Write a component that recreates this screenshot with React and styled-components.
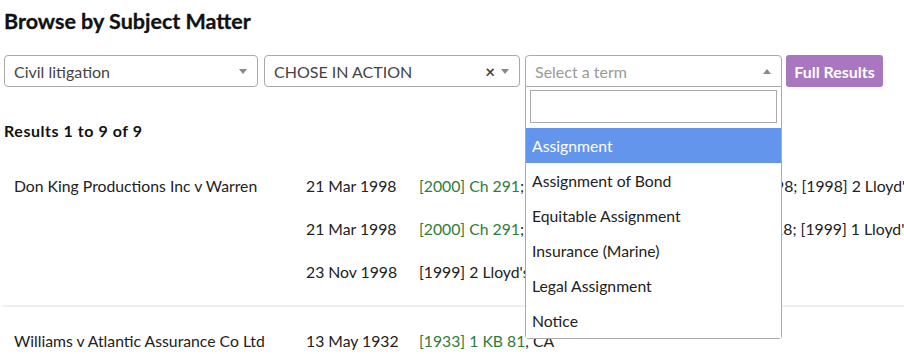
import React from "react";
import styled, { createGlobalStyle } from "styled-components";

const Global = createGlobalStyle`
  html, body { margin: 0; padding: 0; background: #fff; overflow: hidden; }
  body { font-family: Lato, "Open Sans", sans-serif; color: #222; }
  * { box-sizing: border-box; }
`;

const Page = styled.div`
  width: 904px;
  height: 354px;
  overflow: hidden;
  padding: 0 0 0 4px;
`;

const Title = styled.h1`
  margin: 0;
  padding-top: 7px;
  height: 55px;
  font-size: 21.5px;
  line-height: 28px;
  font-weight: 700;
  color: #111;
  -webkit-text-stroke: 0.3px #111;
`;

const Toolbar = styled.div`
  display: flex;
  align-items: flex-start;
  height: 32px;
`;

const SelectWrap = styled.div`
  position: relative;
  width: ${(p) => p.$w}px;
  margin-right: ${(p) => p.$gap}px;
`;

const SelectBox = styled.div`
  display: flex;
  align-items: center;
  height: 32px;
  border: 1px solid #aaa;
  border-radius: ${(p) => (p.$open ? "4px 4px 0 0" : "4px")};
  padding: 0 8px 0 9px;
  font-size: 16px;
  color: ${(p) => (p.$placeholder ? "#999" : "#444")};
  background: #fff;
`;

const SelectText = styled.span`
  flex: 1;
  white-space: nowrap;
`;

const Clear = styled.span`
  font-size: 17px;
  font-weight: 700;
  color: #444;
  margin-right: 6px;
  line-height: 1;
`;

const Arrow = styled.span`
  width: 0;
  height: 0;
  border-left: 4px solid transparent;
  border-right: 4px solid transparent;
  ${(p) =>
    p.$up
      ? "border-bottom: 5px solid #888;"
      : "border-top: 5px solid #888;"}
  margin-right: 2px;
`;

const Button = styled.button`
  width: 97px;
  height: 32px;
  padding: 0;
  border: none;
  border-radius: 3px;
  background: #a877bf;
  color: #fff;
  font-family: Lato, sans-serif;
  font-weight: 700;
  font-size: 16px;
`;

const Dropdown = styled.div`
  position: absolute;
  top: 32px;
  left: 0;
  width: 100%;
  background: #fff;
  border: 1px solid #aaa;
  border-top: none;
  border-radius: 0 0 4px 4px;
  z-index: 10;
`;

const SearchWrap = styled.div`
  padding: 3px 4px 5px 4px;
`;

const Search = styled.div`
  height: 33px;
  border: 1px solid #aaa;
`;

const Option = styled.div`
  height: 35px;
  display: flex;
  align-items: center;
  padding: 0 6px;
  font-size: 15.75px;
  color: ${(p) => (p.$active ? "#fff" : "#222")};
  background: ${(p) => (p.$active ? "#6495ed" : "#fff")};
`;

const ResultsHead = styled.div`
  margin-top: 33px;
  font-size: 16px;
  letter-spacing: 0.55px;
  font-weight: 700;
  color: #111;
  height: 22px;
  line-height: 22px;
`;

const Table = styled.div`
  margin-top: 10px;
  margin-left: -1px;
`;

const Group = styled.div`
  padding: 12px 0;
  border-bottom: ${(p) => (p.$last ? "none" : "2px solid #eee")};
`;

const Row = styled.div`
  display: grid;
  grid-template-columns: 292px 113px auto;
  height: 43px;
  align-items: center;
  font-size: 15.75px;
  color: #222;
  white-space: nowrap;
  padding-left: 11px;
`;

const Link = styled.span`
  color: #2e7d3a;
`;

const cases = [
  {
    name: "Don King Productions Inc v Warren",
    rows: [
      { date: "21 Mar 1998", link: "[2000] Ch 291", rest: "; [1999] 3 WLR 27;\u2009 [1998] 2 All ER 998; [1998] 2 Lloyd's Rep 176" },
      { date: "21 Mar 1998", link: "[2000] Ch 291", rest: "; [1999] 3 WLR 276;[1999] 2 All ER218; [1999] 1 Lloyd's Rep 588" },
      { date: "23 Nov 1998", link: null, rest: "[1999] 2 Lloyd's Rep 176" },
    ],
  },
  {
    name: "Williams v Atlantic Assurance Co Ltd",
    rows: [{ date: "13 May 1932", link: "[1933] 1 KB 81", rest: ", CA" }],
  },
];

const options = [
  "Assignment",
  "Assignment of Bond",
  "Equitable Assignment",
  "Insurance (Marine)",
  "Legal Assignment",
  "Notice",
];

export default function App() {
  return (
    <Page>
      <Global />
      <Title>Browse by Subject Matter</Title>
      <Toolbar>
        <SelectWrap $w={254} $gap={6}>
          <SelectBox>
            <SelectText>Civil litigation</SelectText>
            <Arrow />
          </SelectBox>
        </SelectWrap>
        <SelectWrap $w={256} $gap={5}>
          <SelectBox>
            <SelectText>CHOSE IN ACTION</SelectText>
            <Clear>×</Clear>
            <Arrow />
          </SelectBox>
        </SelectWrap>
        <SelectWrap $w={257} $gap={4}>
          <SelectBox $open $placeholder>
            <SelectText>Select a term</SelectText>
            <Arrow $up />
          </SelectBox>
          <Dropdown>
            <SearchWrap>
              <Search />
            </SearchWrap>
            {options.map((o, i) => (
              <Option key={o} $active={i === 0}>
                {o}
              </Option>
            ))}
          </Dropdown>
        </SelectWrap>
        <Button>Full Results</Button>
      </Toolbar>
      <ResultsHead>Results 1 to 9 of 9</ResultsHead>
      <Table>
        {cases.map((c, ci) => (
          <Group key={c.name} $last={ci === cases.length - 1}>
            {c.rows.map((r, ri) => (
              <Row key={ri}>
                <span>{ri === 0 ? c.name : ""}</span>
                <span>{r.date}</span>
                <span>
                  {r.link && <Link>{r.link}</Link>}
                  {r.rest}
                </span>
              </Row>
            ))}
          </Group>
        ))}
      </Table>
    </Page>
  );
}
